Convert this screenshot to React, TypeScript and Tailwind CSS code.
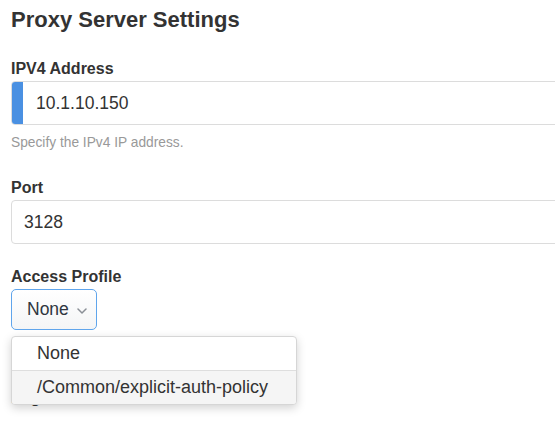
import React from "react";

export default function App() {
  return (
    <div
      className="relative w-[555px] h-[422px] overflow-hidden bg-white text-[#333]"
      style={{ fontFamily: '"Liberation Sans", Arial, Helvetica, sans-serif' }}
    >
      <div className="flex flex-col pl-[11px] pt-[8px]">
        <h1 className="text-[22px] leading-[24px] font-bold text-[#333]">Proxy Server Settings</h1>

        <label className="mt-[27px] mb-[2px] text-[16px] leading-[20px] font-bold">IPV4 Address</label>
        <div className="flex h-[44px] w-[560px] border border-[#dcdcdc] rounded-l-[4px] overflow-hidden">
          <div className="w-[11px] bg-[#4a90e2] shrink-0" />
          <div className="flex items-center pl-[13px] text-[17.5px]">10.1.10.150</div>
        </div>
        <p className="mt-[9px] text-[13.75px] leading-[18px] text-[#999]">Specify the IPv4 IP address.</p>

        <label className="mt-[26px] mb-[2px] text-[16px] leading-[20px] font-bold">Port</label>
        <div className="flex items-center h-[44px] w-[560px] border border-[#dcdcdc] rounded-[4px] pl-[12px] text-[17.5px]">
          3128
        </div>

        <label className="mt-[23px] mb-[2px] text-[16px] leading-[20px] font-bold">Access Profile</label>
        <div className="relative">
          <button className="flex items-center h-[41px] w-[86px] border border-[#5fa5ec] rounded-[5px] bg-gradient-to-b from-white to-[#f4f5f6] pl-[15px] text-[17.5px] text-[#2f3640]">
            <span>None</span>
            <svg width="10" height="6" viewBox="0 0 10 6" className="ml-[8px] mt-[2px]" fill="none">
              <path d="M1 1l4 4 4-4" stroke="#8a8f96" strokeWidth="1.5" strokeLinecap="round" strokeLinejoin="round" />
            </svg>
          </button>
        </div>

        <label className="mt-[58px] text-[16px] leading-[20px] font-bold">Log Level</label>
      </div>

      <div className="absolute left-[11px] top-[336px] w-[286px] rounded-[4px] border border-[#d6d6d6] bg-white shadow-[0_3px_10px_rgba(0,0,0,0.18)] overflow-hidden text-[18px] text-[#333]">
        <div className="flex items-center h-[34px] pl-[25px] border-b border-[#dedede]">None</div>
        <div className="flex items-center h-[33px] pl-[25px] bg-[#f5f5f5]">/Common/explicit-auth-policy</div>
      </div>
    </div>
  );
}
